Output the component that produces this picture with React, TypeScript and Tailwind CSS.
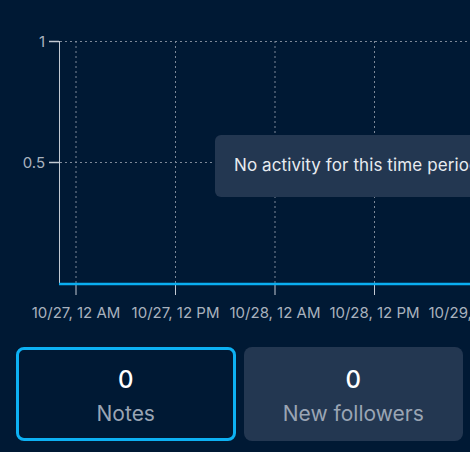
import React from 'react'

const xTicks = [
  { x: 76, label: '10/27, 12 AM' },
  { x: 175.5, label: '10/27, 12 PM' },
  { x: 275, label: '10/28, 12 AM' },
  { x: 374.5, label: '10/28, 12 PM' },
  { x: 474, label: '10/29, 12 AM' },
]

const yTicks = [
  { y: 41.5, label: '1' },
  { y: 162.5, label: '0.5' },
]

function ActivityChart() {
  return (
    <svg width={470} height={330} className="block" style={{ fontFamily: 'Inter, "Liberation Sans", sans-serif' }}>
      {/* grid */}
      {yTicks.map(t => (
        <line key={t.label} x1={60} x2={470} y1={t.y} y2={t.y} stroke="#7d8898" strokeWidth={1} strokeDasharray="2 3" />
      ))}
      {xTicks.map(t => (
        <line key={t.label} x1={t.x} x2={t.x} y1={41} y2={283} stroke="#7d8898" strokeWidth={1} strokeDasharray="2 3" />
      ))}

      {/* y axis */}
      <line x1={59.5} x2={59.5} y1={41} y2={284} stroke="#c3cad3" strokeWidth={1} />
      {yTicks.map(t => (
        <g key={t.label}>
          <line x1={49} x2={59} y1={t.y} y2={t.y} stroke="#c3cad3" strokeWidth={1.5} />
          <text x={45} y={t.y + 5} textAnchor="end" fontSize={15} fill="#a9b2be">
            {t.label}
          </text>
        </g>
      ))}

      {/* x axis ticks + labels */}
      {xTicks.map(t => (
        <g key={t.label}>
          <line x1={t.x} x2={t.x} y1={285} y2={295} stroke="#c3cad3" strokeWidth={1} />
          <text x={t.x} y={318} textAnchor="middle" fontSize={15} fill="#a9b2be">
            {t.label}
          </text>
        </g>
      ))}

      {/* data line (flat zero) */}
      <line x1={59} x2={470} y1={284} y2={284} stroke="#0aaef0" strokeWidth={2.5} />
    </svg>
  )
}

function StatCard({ value, label, active }: { value: number; label: string; active?: boolean }) {
  return (
    <div
      className={`min-w-0 h-[94px] pt-[6px] rounded-lg flex flex-col items-center justify-center ${
        active ? 'border-[3px] border-[#0db1f3] bg-[#001934]' : 'bg-[#233751]'
      }`}
    >
      <span className="text-[24px] leading-[28px] font-medium text-white">{value}</span>
      <span className="text-[21px] leading-[28px] text-[#9aa5b4] mt-[6px]">{label}</span>
    </div>
  )
}

export default function App() {
  return (
    <div
      className="relative w-[470px] h-[452px] overflow-hidden bg-[#001934]"
      style={{ fontFamily: 'Inter, "Liberation Sans", sans-serif' }}
    >
      <ActivityChart />

      {/* empty-state tooltip */}
      <div className="absolute left-[215px] top-[135px] h-[62px] pl-[19px] pr-6 flex items-center rounded-md bg-[#233751] whitespace-nowrap">
        <span className="text-[17px] tracking-[0.1px] text-[#e7ebf0]">No activity for this time period</span>
      </div>

      <div className="grid grid-cols-2 gap-2 pl-4 pr-[7px] mt-[17px]">
        <StatCard value={0} label="Notes" active />
        <StatCard value={0} label="New followers" />
      </div>
    </div>
  )
}
